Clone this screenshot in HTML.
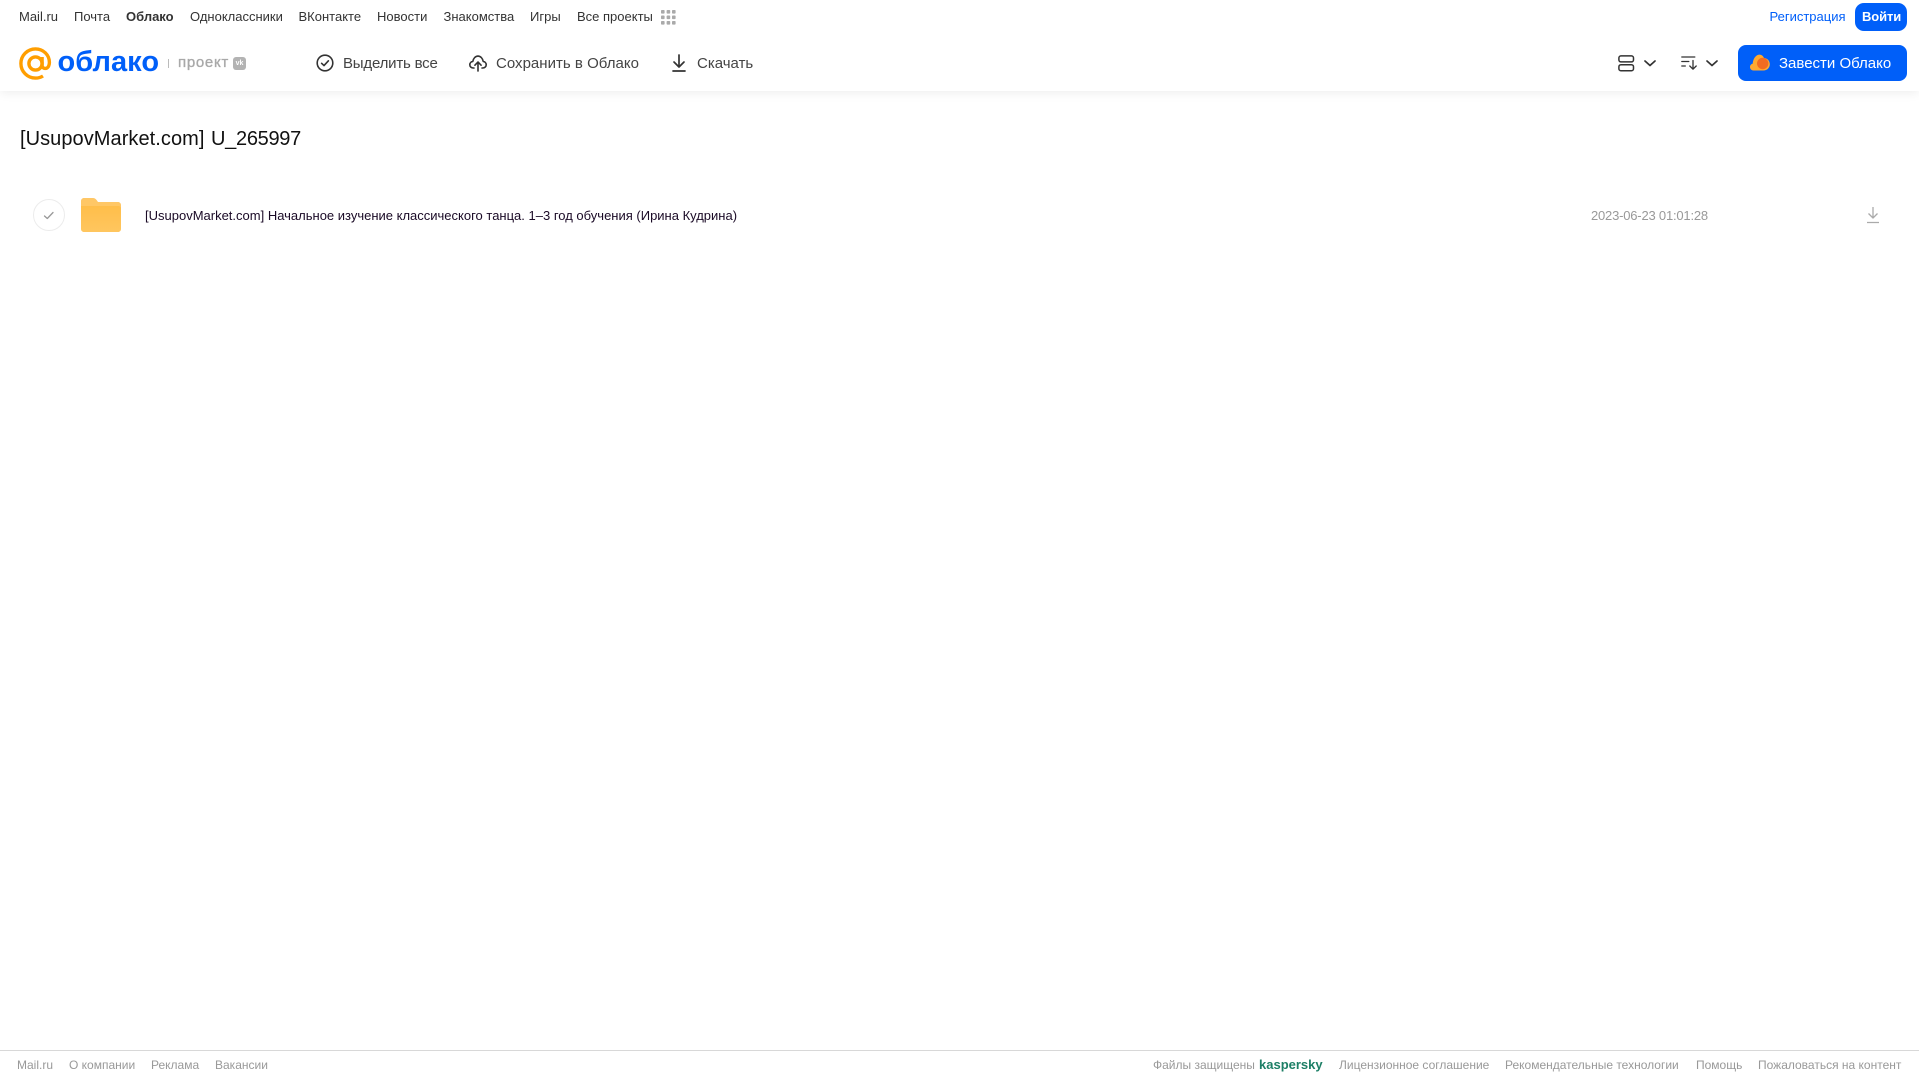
<!DOCTYPE html>
<html lang="ru">
<head>
<meta charset="utf-8">
<title>[UsupovMarket.com] U_265997</title>
<style>
html,body{margin:0;padding:0;background:#fff;}
body{width:1919px;height:1079px;position:relative;overflow:hidden;font-family:"Liberation Sans",Arial,sans-serif;}
.t{position:absolute;white-space:nowrap;line-height:20px;height:20px;}
.n{font-size:13px;color:#333;top:7px;}
.tb{font-size:15px;color:#444;top:53.500px;}
.f{font-size:12px;color:#999;top:1055px;}
svg{position:absolute;display:block;overflow:visible;}
#hdr{position:absolute;left:0;top:0;width:1919px;height:91px;background:#fff;box-shadow:0 2px 10px rgba(0,0,0,.07);}
</style>
</head>
<body>
<div id="hdr"></div>

<div class="t n" style="left:19px">Mail.ru</div>
<div class="t n" style="left:74px">Почта</div>
<div class="t n" style="left:126px;font-weight:700">Облако</div>
<div class="t n" style="left:190px">Одноклассники</div>
<div class="t n" style="left:298.500px">ВКонтакте</div>
<div class="t n" style="left:377px">Новости</div>
<div class="t n" style="left:443.500px">Знакомства</div>
<div class="t n" style="left:530px">Игры</div>
<div class="t n" style="left:577px">Все проекты</div>
<svg style="left:661px;top:10px" width="15" height="15" fill="#aaa">
<rect x="0" y="0" width="3.600" height="3.600" rx=".8"/><rect x="5.600" y="0" width="3.600" height="3.600" rx=".8"/><rect x="11" y="0" width="3.600" height="3.600" rx=".8"/>
<rect x="0" y="5.500" width="3.600" height="3.600" rx=".8"/><rect x="5.600" y="5.500" width="3.600" height="3.600" rx=".8"/><rect x="11" y="5.500" width="3.600" height="3.600" rx=".8"/>
<rect x="0" y="11" width="3.600" height="3.600" rx=".8"/><rect x="5.600" y="11" width="3.600" height="3.600" rx=".8"/><rect x="11" y="11" width="3.600" height="3.600" rx=".8"/>
</svg>

<div class="t n" style="left:1769.500px;color:#005ff9">Регистрация</div>
<div style="position:absolute;left:1855px;top:3px;width:52px;height:28px;background:#005ff9;border-radius:9px"></div>
<div class="t n" style="left:1862px;color:#fff;font-weight:700;top:7px;letter-spacing:-.1px">Войти</div>

<!-- logo -->
<svg style="left:19px;top:47px" width="33" height="33" viewBox="0 0 33 33" fill="none" stroke="#ff9e00" stroke-width="3.400">
<circle cx="16.500" cy="16.500" r="6.600"/>
<path d="M23.100 10v8.500c0 3.600 5.300 4 6.600.4 .5-1.400 .7-2.500 .7-3.400 C30.400 7.800 24.200 1.900 16.500 1.900 C8.400 1.900 1.900 8.400 1.900 16.500 C1.900 24.600 8.400 31.100 16.500 31.100 C19.300 31.100 21.800 30.400 24 29"/>
</svg>
<div class="t" style="left:57.500px;top:45px;height:34px;line-height:34px;font-size:29px;font-weight:700;color:#005ff9;letter-spacing:.05px">облако</div>
<div style="position:absolute;left:168px;top:59px;width:1px;height:9px;background:#bbb"></div>
<div class="t" style="left:178px;top:53px;font-size:15px;color:#a8a8a8;letter-spacing:.7px;-webkit-text-stroke:.35px #a8a8a8">проект</div>
<div style="position:absolute;left:233px;top:57px;width:13px;height:13px;background:#b3b3b3;border-radius:3px"></div>
<div class="t" style="left:233px;top:57px;width:13px;height:13px;line-height:13px;font-size:7px;font-weight:700;color:#fff;text-align:center">vk</div>

<!-- toolbar -->
<svg style="left:316px;top:54px" width="18" height="18" viewBox="0 0 18 18" fill="none" stroke="#333" stroke-width="1.600" stroke-linecap="round" stroke-linejoin="round">
<circle cx="9" cy="9" r="7.800"/><path d="M5.600 9.300l2.400 2.300 4.400-4.800"/>
</svg>
<div class="t tb" style="left:343px;letter-spacing:-.2px">Выделить все</div>

<svg style="left:469px;top:54px" width="18" height="18" viewBox="0 0 18 18" fill="none" stroke="#333" stroke-width="1.600" stroke-linecap="round" stroke-linejoin="round">
<path d="M5 14H4.200C2.300 14 .8 12.500 .8 10.700c0-1.700 1.300-3.100 3-3.300C4.300 4.400 6.400 2.100 9 2.100s4.700 2.300 5.200 5.300c1.700.2 3 1.600 3 3.300 0 1.800-1.500 3.300-3.400 3.300H13"/>
<path d="M9 17V8.200M5.900 11.200L9 8l3.100 3.200"/>
</svg>
<div class="t tb" style="left:496px;letter-spacing:.02px">Сохранить в Облако</div>

<svg style="left:671px;top:54px" width="16" height="18" viewBox="0 0 16 18" fill="none" stroke="#333" stroke-width="1.700" stroke-linecap="round" stroke-linejoin="round">
<path d="M8 1v11.500M3 8l5 5 5-5M2 17h12"/>
</svg>
<div class="t tb" style="left:697px">Скачать</div>

<!-- view / sort -->
<svg style="left:1618px;top:55px" width="17" height="17" viewBox="0 0 17 17" fill="none" stroke="#333" stroke-width="1.500">
<rect x=".9" y=".9" width="14.600" height="6" rx="2"/><rect x=".9" y="9.700" width="14.600" height="6" rx="2"/>
</svg>
<svg style="left:1644px;top:60px" width="12" height="7" viewBox="0 0 12 7" fill="none" stroke="#333" stroke-width="1.700" stroke-linecap="round" stroke-linejoin="round"><path d="M1 1l5 4.500L11 1"/></svg>
<svg style="left:1681px;top:56px" width="17" height="14" viewBox="0 0 17 14" fill="none" stroke="#333" stroke-width="1.300" stroke-linecap="round" stroke-linejoin="round">
<path d="M.8 1h13M.8 5.500h7M.8 10h3.500M12 4.500v8.500M8.800 10l3.200 3.200 3.200-3.200"/>
</svg>
<svg style="left:1706px;top:60px" width="12" height="7" viewBox="0 0 12 7" fill="none" stroke="#333" stroke-width="1.700" stroke-linecap="round" stroke-linejoin="round"><path d="M1 1l5 4.500L11 1"/></svg>

<div style="position:absolute;left:1738px;top:45px;width:169px;height:36px;background:#005ff9;border-radius:8px"></div>
<svg style="left:1750px;top:54px" width="20" height="17" viewBox="0 0 20 17">
<path d="M3.500 16.500C1.500 16.500 0 15 0 13c0-1.700 1.100-3 2.700-3.400C2.900 6 5.100 1 9 .6c2.500-.2 4.300 1.500 5 3.400 3.200.2 5.800 2.800 5.800 6.200 0 3.500-2.800 6.300-6.300 6.300z" fill="#ffa930"/>
<circle cx="12.700" cy="9.500" r="5.700" fill="#f26c21"/>
</svg>
<div class="t" style="left:1779px;top:53.500px;font-size:15px;color:#fff">Завести Облако</div>

<!-- title -->
<div class="t" style="left:20px;top:125px;height:28px;line-height:28px;font-size:20px;color:#111"><span style="letter-spacing:.06px;margin-right:1px">[UsupovMarket.com]</span> <span style="letter-spacing:-.3px">U_265997</span></div>

<!-- row -->
<div style="position:absolute;left:33px;top:199px;width:30px;height:30px;border:1px solid #ececec;border-radius:50%"></div>
<svg style="left:43px;top:211px" width="12" height="9" viewBox="0 0 12 9" fill="none" stroke="#999" stroke-width="1.300" stroke-linecap="round" stroke-linejoin="round"><path d="M1.500 5l2.800 2.500L10 1.500"/></svg>
<svg style="left:81px;top:198px" width="40" height="34" viewBox="0 0 40 34">
<defs><linearGradient id="fg" x1="0" y1="0" x2="0" y2="1"><stop offset="0" stop-color="#ffbe4a"/><stop offset="1" stop-color="#ffc65f"/></linearGradient></defs>
<path d="M0 3c0-1.700 1.300-3 3-3h9c1.500 0 2.500.7 3.500 1.900L17 4h20c1.700 0 3 1.300 3 3v5H0z" fill="#ffc766"/>
<path d="M0 8h37c1.700 0 3 .8 3 2.500V31c0 1.700-1.300 3-3 3H3c-1.700 0-3-1.300-3-3z" fill="url(#fg)"/>
</svg>
<div class="t" style="left:145px;top:206px;font-size:13px;color:#1a0a26">[UsupovMarket.com] Начальное изучение классического танца. 1–3 год обучения (Ирина Кудрина)</div>
<div class="t" style="left:1591px;top:206px;font-size:13px;color:#999;letter-spacing:-.2px">2023-06-23 01:01:28</div>
<svg style="left:1866px;top:206px" width="14" height="18" viewBox="0 0 14 18" fill="none" stroke="#aaa" stroke-width="1.300" stroke-linejoin="round">
<path d="M7 1v10.500M2.500 7.500L7 12l4.500-4.500M1 16.500h12"/>
</svg>

<!-- footer -->
<div style="position:absolute;left:0;top:1050px;width:1919px;height:1px;background:#d8d8d8"></div>
<div class="t f" style="left:17px">Mail.ru</div>
<div class="t f" style="left:69px">О компании</div>
<div class="t f" style="left:151px">Реклама</div>
<div class="t f" style="left:215px">Вакансии</div>
<div class="t f" style="left:1153px">Файлы защищены</div>
<div class="t f" style="left:1259px;color:#1d7f66;font-weight:700;font-size:13px">kaspersky</div>
<div class="t f" style="left:1339px">Лицензионное соглашение</div>
<div class="t f" style="left:1505px">Рекомендательные технологии</div>
<div class="t f" style="left:1696px">Помощь</div>
<div class="t f" style="left:1758px">Пожаловаться на контент</div>
</body>
</html>
